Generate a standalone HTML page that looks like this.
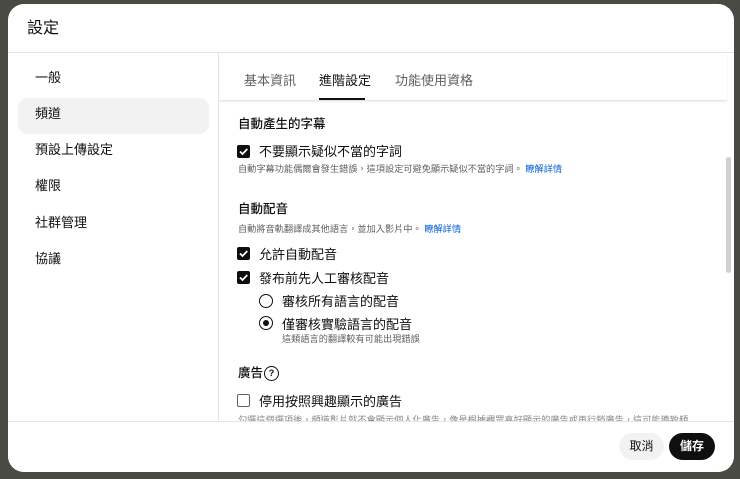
<!DOCTYPE html>
<html><head><meta charset="utf-8"><style>
*{margin:0;padding:0;box-sizing:border-box}
body{width:740px;height:479px;background:#4a4a44;font-family:"Liberation Sans","Noto Sans CJK TC",sans-serif;color:#0f0f0f;position:relative;overflow:hidden;line-height:1}
.dlg{position:absolute;left:8px;top:4px;width:726px;height:468px;background:#fff;border-radius:16px;overflow:hidden}
.hd{position:absolute;left:0;top:0;right:0;height:49px;border-bottom:1px solid #e5e5e5}
.hd h1{position:absolute;left:19px;top:17px;font-size:16px;font-weight:400}
.side{position:absolute;left:0;top:49px;width:211px;height:368px;border-right:1px solid #e5e5e5}
.side div{position:absolute;left:27px;font-size:13px}
.sel{position:absolute;left:10px;top:45px;width:191px;height:36px;background:#f2f2f2;border-radius:10px}
.tabs{position:absolute;left:212px;top:49px;right:7px;height:48px;border-bottom:1px solid #e5e5e5;box-shadow:0 1px 2px rgba(0,0,0,.08)}
.tabs span{position:absolute;top:21px;font-size:13px;color:#606060}
.tabs .on{color:#0f0f0f}
.ul{position:absolute;left:99px;top:45px;width:46px;height:2px;background:#0f0f0f}
.c{position:absolute;font-size:13px;white-space:nowrap}
.h{font-size:12.5px;font-weight:500}
.s{font-size:9.2px;color:#606060}
.a{color:#065fd4}
.cb{position:absolute;width:13px;height:13px;background:#0f0f0f;border-radius:2px}
.cb svg{position:absolute;left:1px;top:1px}
.cbe{position:absolute;width:13px;height:13px;border:1.5px solid #606060;border-radius:2px}
.rd{position:absolute;width:14px;height:14px;border:1.5px solid #0f0f0f;border-radius:50%}
.rd i{position:absolute;left:2.5px;top:2.5px;width:6px;height:6px;background:#0f0f0f;border-radius:50%}
.ft{position:absolute;left:0;top:417px;right:0;bottom:0;border-top:1px solid #e5e5e5;background:#fff}
.btn{position:absolute;top:429px;height:27px;border-radius:14px;font-size:12px;line-height:27px;text-align:center}
.sb{position:absolute;left:718px;top:153px;width:5px;height:116px;background:#d0d0d0;border-radius:3px}
</style></head><body>
<div class="dlg">
<div class="hd"><h1>設定</h1></div>
<div class="side">
<div class="sel" style="left:10px"></div>
<div style="top:18px">一般</div>
<div style="top:54px">頻道</div>
<div style="top:90px">預設上傳設定</div>
<div style="top:126px">權限</div>
<div style="top:163px">社群管理</div>
<div style="top:199px">協議</div>
</div>
<div class="tabs"><span style="left:24px">基本資訊</span><span class="on" style="left:99px">進階設定</span><span style="left:175px">功能使用資格</span><div class="ul"></div></div>
<div class="sb"></div>
<div class="c h" style="left:230px;top:114px">自動產生的字幕</div>
<div class="cb" style="left:229px;top:141px"><svg width="11" height="11" viewBox="0 0 11 11"><path d="M2 5.5l2.5 2.5 4.8-5" stroke="#fff" stroke-width="1.7" fill="none"/></svg></div>
<div class="c" style="left:251px;top:141px">不要顯示疑似不當的字詞</div>
<div class="c s" style="left:230px;top:161px">自動字幕功能偶爾會發生錯誤，這項設定可避免顯示疑似不當的字詞。 <span class="a">瞭解詳情</span></div>
<div class="c h" style="left:230px;top:199px">自動配音</div>
<div class="c s" style="left:230px;top:221px">自動將音軌翻譯成其他語言，並加入影片中。 <span class="a">瞭解詳情</span></div>
<div class="cb" style="left:229px;top:243px"><svg width="11" height="11" viewBox="0 0 11 11"><path d="M2 5.5l2.5 2.5 4.8-5" stroke="#fff" stroke-width="1.7" fill="none"/></svg></div>
<div class="c" style="left:251px;top:244px">允許自動配音</div>
<div class="cb" style="left:229px;top:267px"><svg width="11" height="11" viewBox="0 0 11 11"><path d="M2 5.5l2.5 2.5 4.8-5" stroke="#fff" stroke-width="1.7" fill="none"/></svg></div>
<div class="c" style="left:251px;top:268px">發布前先人工審核配音</div>
<div class="rd" style="left:251px;top:290px"></div>
<div class="c" style="left:274px;top:291px">審核所有語言的配音</div>
<div class="rd" style="left:251px;top:312px"><i></i></div>
<div class="c" style="left:274px;top:314px">僅審核實驗語言的配音</div>
<div class="c s" style="left:274px;top:331px">這類語言的翻譯較有可能出現錯誤</div>
<div class="c h" style="left:230px;top:363px">廣告</div>
<div style="position:absolute;left:256px;top:362px;width:15px;height:15px;border:1.5px solid #0f0f0f;border-radius:50%;font-size:9px;font-weight:bold;text-align:center;line-height:12px">?</div>
<div class="cbe" style="left:229px;top:390px"></div>
<div class="c" style="left:251px;top:391px">停用按照興趣顯示的廣告</div>
<div class="c s" style="left:230px;top:412px;color:#888">勾選這個選項後，頻道影片就不會顯示個人化廣告，像是根據觀眾喜好顯示的廣告或再行銷廣告，這可能導致頻</div>
<div class="ft"></div>
<div class="btn" style="left:611px;width:45px;background:#f2f2f2">取消</div>
<div class="btn" style="left:661px;width:46px;background:#0f0f0f;color:#fff;font-weight:bold">儲存</div>
</div>
</body></html>
